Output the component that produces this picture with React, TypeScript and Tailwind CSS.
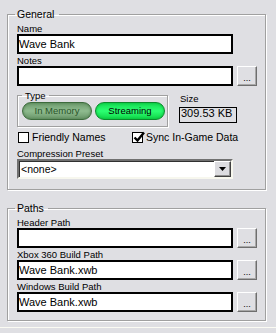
import React from 'react';

const etched = 'border border-[#a0a0a0] shadow-[inset_1px_1px_0_#ffffff,1px_1px_0_#ffffff]';

function Label({ text }: { text: string }) {
  return <div className="h-[12px] pt-[2px] text-[9.5px] leading-[10px] whitespace-nowrap">{text}</div>;
}

function TextBox({ value = '' }: { value?: string }) {
  return (
    <div className="h-[20px] w-[216px] border-2 border-black bg-white text-[11px] leading-[16px] whitespace-nowrap overflow-hidden">
      {value}
    </div>
  );
}

function BrowseButton() {
  return (
    <button className="ml-[4px] h-[20px] w-[20px] border border-t-white border-l-white border-r-[#6e6e6e] border-b-[#6e6e6e] bg-[#dfdfe3] shadow-[inset_-1px_-1px_0_#a8a8a8] text-[9px] leading-[9px] pt-[4px]">
      ...
    </button>
  );
}

function PathRow({ label, value, browse = true }: { label: string; value?: string; browse?: boolean }) {
  return (
    <div>
      <Label text={label} />
      <div className="flex">
        <TextBox value={value} />
        {browse && <BrowseButton />}
      </div>
    </div>
  );
}

function CheckBox({ label, checked }: { label: string; checked?: boolean }) {
  return (
    <div className="flex items-center h-[13px]">
      <div className="relative w-[11px] h-[11px] border border-black bg-white">
        {checked && (
          <svg className="absolute -top-[2px] left-[0px]" width="12" height="12" viewBox="0 0 12 12">
            <path d="M1.5 6.5 L4.5 9.5 L11 1.5" fill="none" stroke="#000" strokeWidth="2.4" />
          </svg>
        )}
      </div>
      <span className="ml-[3px] text-[10.5px] leading-[13px] whitespace-nowrap">{label}</span>
    </div>
  );
}

export default function App() {
  return (
    <div className="w-[276px] h-[333px] bg-[#dfdfe3] overflow-hidden text-black font-['Liberation_Sans',Arial,sans-serif]">
      <div className="pl-[7px] pt-[8px] w-[266px]">
        <fieldset className={`${etched} h-[182px] pl-[9px]`}>
          <legend className="ml-[-2px] pl-[2px] pr-[5px] text-[10.5px] leading-[13px]">General</legend>
          <div className="mt-[1px]">
            <PathRow label="Name" value="Wave Bank" browse={false} />
            <PathRow label="Notes" />
          </div>

          <div className="mt-[3px] flex">
            <fieldset className={`${etched} w-[151px] h-[38px]`}>
              <legend className="ml-[4px] px-[3px] text-[9.5px] leading-[13px]">Type</legend>
              <div className="flex pl-[4px] gap-[3px]">
                <button className="w-[70px] h-[18px] rounded-full border border-[#3d6b3d] bg-gradient-to-b from-[#6f9d6f] via-[#8fbb8f] to-[#6a976a] shadow-[inset_0_0_3px_#4d7d4d] text-[9.5px] leading-[16px] text-[#2a552a]">
                  In Memory
                </button>
                <button className="w-[70px] h-[18px] rounded-full border border-[#0b8a2c] bg-gradient-to-b from-[#14dc52] via-[#2cff72] to-[#0ed648] shadow-[inset_0_0_3px_#07b83a] text-[9.5px] leading-[16px] text-black">
                  Streaming
                </button>
              </div>
            </fieldset>
            <div className="ml-[11px]">
              <div className="h-[18px] pt-[5px] pl-[1px] text-[9.5px] leading-[10px]">Size</div>
              <div className="w-[58px] h-[16px] border border-black pl-[1px] text-[11px] leading-[10px] whitespace-nowrap">
                309.53 KB
              </div>
            </div>
          </div>

          <div className="mt-[4px] flex">
            <div className="ml-[1px] w-[114px]">
              <CheckBox label="Friendly Names" />
            </div>
            <CheckBox label="Sync In-Game Data" checked />
          </div>

          <div className="mt-[3px]">
            <Label text="Compression Preset" />
            <div className="flex h-[20px] w-[216px] border-2 border-t-[#707070] border-l-[#707070] border-b-[#f7f7ee] border-r-[#f7f7ee] bg-white shadow-[inset_1px_1px_0_#303030]">
              <div className="flex-1 pl-[2px] text-[10.5px] leading-[16px]">&lt;none&gt;</div>
              <div className="flex items-center justify-center w-[17px] h-[16px] border border-t-white border-l-white border-r-[#404040] border-b-[#404040] bg-[#dcdce0] shadow-[inset_-1px_-1px_0_#909090]">
                <svg width="7" height="4" viewBox="0 0 7 4">
                  <path d="M0 0 H7 L3.5 4 Z" fill="#000" />
                </svg>
              </div>
            </div>
          </div>
        </fieldset>

        <fieldset className={`${etched} mt-[12px] h-[119px] pl-[9px]`}>
          <legend className="ml-[-2px] pl-[2px] pr-[4px] text-[10.5px] leading-[13px]">Paths</legend>
          <div className="mt-[1px]">
            <PathRow label="Header Path" />
            <PathRow label="Xbox 360 Build Path" value="Wave Bank.xwb" />
            <PathRow label="Windows Build Path" value="Wave Bank.xwb" />
          </div>
        </fieldset>
      </div>
      <div className="mt-[6px] h-[1px] bg-[#fbfbf3]" />
    </div>
  );
}
